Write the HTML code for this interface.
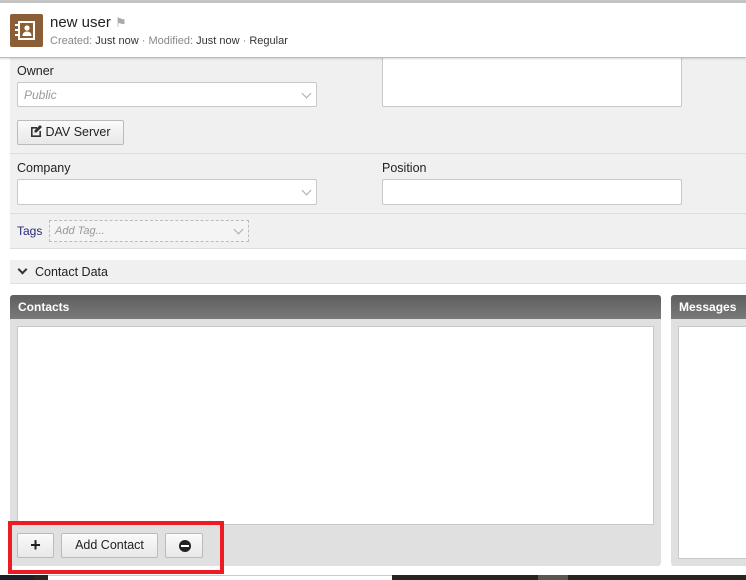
<!DOCTYPE html>
<html><head><meta charset="utf-8"><style>
*{box-sizing:border-box;margin:0;padding:0}
body{width:746px;height:580px;overflow:hidden;background:#fff;font-family:"Liberation Sans",Arial,sans-serif;font-size:12px;color:#333;position:relative}
.a{position:absolute}
.inp{position:absolute;background:#fff;border:1px solid #c8c8c8;border-radius:2px}
.chev{position:absolute;right:6px;top:7px;width:7px;height:7px;border-right:1px solid #aaa;border-bottom:1px solid #aaa;transform:rotate(45deg)}
.btn{position:absolute;background:linear-gradient(#fafafa,#e8e8e8);border:1px solid #bbb;border-radius:2px;text-align:center;color:#222;font-size:12.5px}
</style></head><body>
<div class="a" style="left:0;top:0;width:746px;height:3px;background:#c4c4c4"></div>
<div class="a" style="left:0;top:3px;width:746px;height:55px;background:#fff;border-bottom:1px solid #bbb;box-shadow:0 1px 2px rgba(0,0,0,.15);z-index:2"></div>
<div class="a" style="left:10px;top:14px;width:33px;height:33px;background:#8b5e36;border-radius:2px;z-index:3">
<svg width="33" height="33" viewBox="0 0 33 33"><rect x="8" y="7" width="17" height="19" fill="#fff"/><rect x="10" y="9" width="13" height="15" fill="#8b5e36"/><circle cx="17" cy="14" r="2.6" fill="#fff"/><path d="M12.5 22c0-3 2-4.5 4.5-4.5s4.5 1.5 4.5 4.5z" fill="#fff"/><rect x="5" y="10" width="5" height="2" fill="#fff"/><rect x="5" y="15" width="5" height="2" fill="#fff"/><rect x="5" y="20" width="5" height="2" fill="#fff"/></svg></div>
<div class="a" style="left:50px;top:14px;font-size:15px;color:#222;z-index:3">new user <span style="color:#aaa;font-size:13px">⚑</span></div>
<div class="a" style="left:50px;top:35px;font-size:11px;color:#888;z-index:3">Created: <span style="color:#333">Just now</span> · Modified: <span style="color:#333">Just now</span> · <span style="color:#333">Regular</span></div>
<div class="a" style="left:10px;top:58px;width:736px;height:191px;background:#f0f0f0;border-bottom:1px solid #ddd"></div>
<div class="a" style="left:17px;top:64px;font-size:12.5px;color:#222">Owner</div>
<div class="inp" style="left:17px;top:82px;width:300px;height:25px"><span style="position:absolute;left:6px;top:5px;font-style:italic;color:#999">Public</span><div class="chev"></div></div>
<div class="inp" style="left:382px;top:56px;width:300px;height:51px"></div>
<div class="btn" style="left:17px;top:120px;width:107px;height:25px;line-height:23px"><svg width="12" height="12" viewBox="0 0 12 12" style="vertical-align:-1px;margin-right:3px"><path d="M1 2h6v1.6H2.6v6.8h6.8V6H11v6H1z" fill="#333"/><path d="M10 0l2 2-5.5 5.5H4.5v-2z" fill="#333"/></svg>DAV Server</div>
<div class="a" style="left:10px;top:153px;width:736px;height:1px;background:#ddd"></div>
<div class="a" style="left:17px;top:161px;font-size:12.5px;color:#222">Company</div>
<div class="a" style="left:382px;top:161px;font-size:12.5px;color:#222">Position</div>
<div class="inp" style="left:17px;top:179px;width:300px;height:26px"><div class="chev"></div></div>
<div class="inp" style="left:382px;top:179px;width:300px;height:26px"></div>
<div class="a" style="left:10px;top:213px;width:736px;height:1px;background:#ddd"></div>
<div class="a" style="left:17px;top:224px;color:#2a2a7a;font-size:12px">Tags</div>
<div class="a" style="left:49px;top:220px;width:200px;height:22px;border:1px dashed #bbb;background:#f4f4f4"><span style="position:absolute;left:5px;top:4px;font-style:italic;color:#999;font-size:11px">Add Tag...</span><div class="chev" style="top:5px"></div></div>
<div class="a" style="left:10px;top:260px;width:736px;height:24px;background:#f0f0f0;border-bottom:1px solid #e0e0e0"></div>
<div class="a" style="left:18px;top:265px;font-size:12.5px;color:#222"><span style="display:inline-block;width:7px;height:7px;border-right:2px solid #333;border-bottom:2px solid #333;transform:rotate(45deg);margin:0 9px 3px 1px"></span>Contact Data</div>
<div class="a" style="left:10px;top:295px;width:651px;height:271px;background:#e0e0e0;border-radius:3px"></div>
<div class="a" style="left:10px;top:295px;width:651px;height:24px;background:linear-gradient(#5e5e5e,#7a7a7a);border-radius:3px 3px 0 0;color:#fff;font-weight:bold;padding:5px 8px;font-size:12px">Contacts</div>
<div class="a" style="left:17px;top:326px;width:637px;height:199px;background:#fff;border:1px solid #c8c8c8"></div>
<div class="a" style="left:671px;top:295px;width:80px;height:271px;background:#e0e0e0;border-radius:3px"></div>
<div class="a" style="left:671px;top:295px;width:80px;height:24px;background:linear-gradient(#5e5e5e,#7a7a7a);border-radius:3px 0 0 0;color:#fff;font-weight:bold;padding:5px 8px;font-size:12px">Messages</div>
<div class="a" style="left:678px;top:326px;width:70px;height:233px;background:#fff;border:1px solid #c8c8c8"></div>
<div class="btn" style="left:17px;top:533px;width:37px;height:25px;line-height:22px;font-size:18px;font-weight:bold">+</div>
<div class="btn" style="left:61px;top:533px;width:97px;height:25px;line-height:23px">Add Contact</div>
<div class="btn" style="left:165px;top:533px;width:38px;height:25px"><span style="position:absolute;left:13px;top:6px;width:12px;height:12px;border-radius:50%;background:#222"></span><span style="position:absolute;left:15px;top:11px;width:8px;height:2px;background:#fff"></span></div>
<div class="a" style="left:8px;top:521px;width:216px;height:53px;border:4px solid #ed1c24"></div>
<div class="a" style="left:0;top:575px;width:746px;height:5px;background:#2a2420"></div>
<div class="a" style="left:0;top:575px;width:34px;height:5px;background:#1b1e28"></div>
<div class="a" style="left:48px;top:575px;width:344px;height:5px;background:#fff;border-top:1px solid #ccc"></div>
<div class="a" style="left:538px;top:575px;width:30px;height:5px;background:#5a5650"></div>
</body></html>
